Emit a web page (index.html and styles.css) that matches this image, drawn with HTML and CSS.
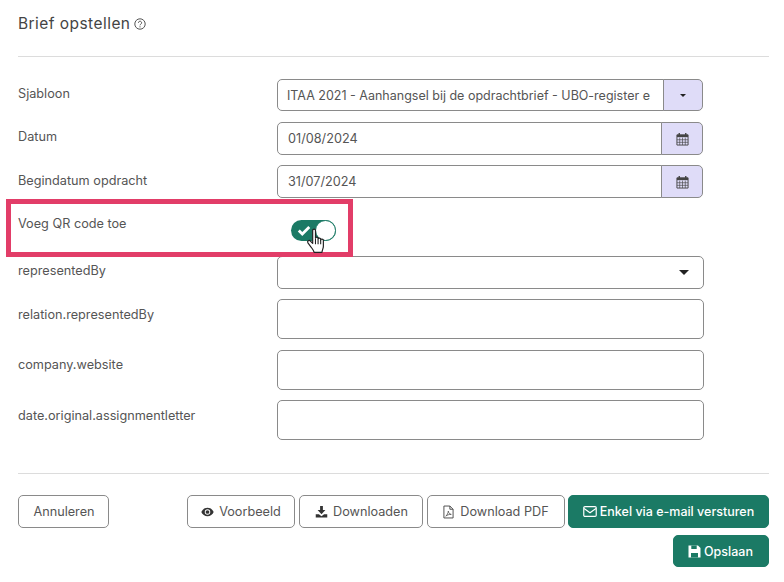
FILE: index.html
```html
<!DOCTYPE html>
<html lang="nl">
<head>
<meta charset="utf-8">
<title>Brief opstellen</title>
<link rel="stylesheet" href="styles.css">
</head>
<body>
<div class="page">
  <header class="head">
    <h1 class="title">Brief opstellen</h1>
    <svg class="help" viewBox="0 0 12 12" width="12" height="12"><circle cx="6" cy="6" r="5.2" fill="none" stroke="#555" stroke-width="1"/><path d="M4.4 4.8a1.6 1.6 0 1 1 2.5 1.3c-.6.4-.9.6-.9 1.2" fill="none" stroke="#555" stroke-width="1"/><circle cx="6" cy="8.8" r=".65" fill="#555"/></svg>
  </header>
  <form class="form">
    <div class="row r-sjabloon">
      <label class="label">Sjabloon</label>
      <div class="group h32">
        <div class="field grow select-text">ITAA 2021 - Aanhangsel bij de opdrachtbrief - UBO-register e</div>
        <div class="addon addon-caret"><span class="caret small"></span></div>
      </div>
    </div>
    <div class="row r-date">
      <label class="label">Datum</label>
      <div class="group h33">
        <div class="field grow">01/08/2024</div>
        <div class="addon">
          <svg class="cal" viewBox="0 0 14 15" width="13" height="14"><path d="M1 3h12v11H1z" fill="none" stroke="#444" stroke-width="1"/><path d="M1 3h12v2.500H1z" fill="#444"/><path d="M3.500 1v3M10.500 1v3" stroke="#444" stroke-width="1.500"/><path d="M1 8.300h12M1 11.100h12M4 6v8M7 6v8M10 6v8" stroke="#444" stroke-width=".7"/></svg>
        </div>
      </div>
    </div>
    <div class="row r-date2">
      <label class="label">Begindatum opdracht</label>
      <div class="group h33">
        <div class="field grow">31/07/2024</div>
        <div class="addon">
          <svg class="cal" viewBox="0 0 14 15" width="13" height="14"><path d="M1 3h12v11H1z" fill="none" stroke="#444" stroke-width="1"/><path d="M1 3h12v2.500H1z" fill="#444"/><path d="M3.500 1v3M10.500 1v3" stroke="#444" stroke-width="1.500"/><path d="M1 8.300h12M1 11.100h12M4 6v8M7 6v8M10 6v8" stroke="#444" stroke-width=".7"/></svg>
        </div>
      </div>
    </div>
    <div class="row r-toggle">
      <label class="label">Voeg QR code toe</label>
      <div class="toggle">
        <svg class="check" viewBox="0 0 14 11" width="14" height="11"><path d="M1.800 5.500l3.500 3.500 7-7" fill="none" stroke="#fff" stroke-width="2.800"/></svg>
        <span class="knob"></span>
      </div>
      <svg class="hand" viewBox="0 0 20 25" width="20" height="25"><path d="M6 2.200c0-1.500 2.600-1.500 2.600 0v7.300c0-1.300 2.400-1.300 2.400 0v.8c0-1.300 2.400-1.300 2.400 0v.9c0-1.300 2.500-1.300 2.500.2v5.500c0 2-1 3-1.300 5.600H7.400c-.5-2-1.800-3.300-3.600-5.800L1.600 13.800c-1-1.600 1-3 2.300-1.700L6 14.300z" fill="#fff" stroke="#222" stroke-width="1.100" stroke-linejoin="round"/><path d="M8.600 10v5M11 10.500v4.500M13.400 11.200v3.800" stroke="#222" stroke-width="1"/></svg>
    </div>
    <div class="row r-rep">
      <label class="label">representedBy</label>
      <div class="group h33">
        <div class="field grow single"><span class="caret"></span></div>
      </div>
    </div>
    <div class="row r-rel">
      <label class="label">relation.representedBy</label>
      <div class="field box"></div>
    </div>
    <div class="row r-web">
      <label class="label">company.website</label>
      <div class="field box"></div>
    </div>
    <div class="row r-orig">
      <label class="label">date.original.assignmentletter</label>
      <div class="field box"></div>
    </div>
  </form>
  <footer class="foot">
    <button class="btn cancel" type="button">Annuleren</button>
    <div class="actions">
      <button class="btn w-prev" type="button">
        <svg viewBox="0 0 16 12" width="13" height="10"><path d="M8 .8C4.500.8 1.700 3 .4 6c1.300 3 4.100 5.200 7.600 5.200S14.300 9 15.600 6C14.300 3 11.500.8 8 .8z" fill="#333"/><circle cx="8" cy="6" r="3.400" fill="#fff"/><circle cx="8" cy="6" r="2.300" fill="#333"/></svg>
        Voorbeeld</button>
      <button class="btn w-down" type="button">
        <svg viewBox="0 0 14 14" width="13" height="13"><path d="M5.500 1h3v4.500h2.700L7 10 2.800 5.500h2.700z" fill="#333"/><path d="M.8 10h3.400L7 12l2.800-2h3.400v3.500H.8z" fill="#333"/></svg>
        Downloaden</button>
      <button class="btn w-pdf" type="button">
        <svg viewBox="0 0 12 15" width="11" height="14"><path d="M1 1h6.500L11 4.500V14H1z" fill="none" stroke="#444" stroke-width="1"/><path d="M7.500 1v3.500H11" fill="none" stroke="#444" stroke-width="1"/><path d="M3 12c1.500-1 2.500-3 2.800-5.500.2 2 1.500 3.300 3.200 3.600-2-.1-4.500.6-6 1.900z" fill="none" stroke="#444" stroke-width=".8"/></svg>
        Download PDF</button>
      <button class="btn primary w-mail" type="button">
        <svg viewBox="0 0 15 12" width="14" height="11"><rect x=".7" y=".7" width="13.600" height="10.600" rx="1.300" fill="none" stroke="#fff" stroke-width="1.300"/><path d="M1 2.800l6.500 4.500L14 2.800" fill="none" stroke="#fff" stroke-width="1.300"/></svg>
        Enkel via e-mail versturen</button>
      <button class="btn primary w-save" type="button">
        <svg viewBox="0 0 13 13" width="13" height="13"><path d="M.5 .5h9.500l2.500 2.500v9.500H.5z" fill="#fff"/><path d="M3.300 .5h5.400v3.500H3.300z" fill="#1b7a65"/><path d="M3 8h7v4.500H3z" fill="#1b7a65"/></svg>
        Opslaan</button>
    </div>
  </footer>
</div>
<div class="highlight"></div>
</body>
</html>
```

FILE: styles.css
```css
* { box-sizing: border-box; }
html, body { margin: 0; padding: 0; background: #fff; }
body {
  width: 784px;
  height: 582px;
  overflow: hidden;
  position: relative;
  font-family: Inter, "Liberation Sans", sans-serif;
  font-size: 12.700px;
  color: #555;
}
.page { padding: 0 15px 0 18px; }
.head {
  display: flex;
  align-items: center;
  gap: 4px;
  height: 57px;
  padding-bottom: 9px;
  border-bottom: 1px solid #dcdcdc;
}
.title {
  margin: 0;
  font-size: 15.500px;
  font-weight: 400;
  letter-spacing: .45px;
  color: #444;
}
.help { margin-top: 1px; }
.form { padding-top: 22px; }
.row {
  display: grid;
  grid-template-columns: 259px 426px;
  position: relative;
}
.label { padding-top: 7px; line-height: 15px; color: #555; }
.r-sjabloon { height: 43px; }
.r-date { height: 43px; }
.r-date2 { height: 43px; }
.r-toggle { height: 48px; }
.r-rep { height: 43px; }
.r-rel { height: 51px; }
.r-web { height: 50px; }
.r-orig { height: 74px; border-bottom: 1px solid #dcdcdc; }
.r-rep .label { padding-top: 7px; }
.r-rel .label { padding-top: 8px; }
.r-web .label { padding-top: 7px; }
.r-orig .label { padding-top: 8px; }
.r-date .label { padding-top: 7px; }
.r-date2 .label { padding-top: 8px; }
.r-toggle .label { padding-top: 8px; }
.group { display: flex; }
.r-rep .group { width: 427px; }
.h32 { height: 32px; }
.h33 { height: 33px; }
.field {
  display: flex;
  align-items: center;
  padding: 0 10px;
  border: 1px solid #8a8a8a;
  background: #fff;
  color: #555;
  font-size: inherit;
  white-space: nowrap;
  overflow: hidden;
}
.select-text { font-size: 12.500px; padding-left: 9px; }
.grow { flex: 1; border-radius: 5px 0 0 5px; min-width: 0; }
.single { border-radius: 5px; justify-content: flex-end; }
.box { height: 40px; width: 427px; border-radius: 5px; }
.addon {
  width: 42px;
  display: flex;
  align-items: center;
  justify-content: center;
  background: #dfdcf8;
  border: 1px solid #8a8a8a;
  margin-left: -1px;
  border-radius: 0 5px 5px 0;
}
.addon-caret { width: 40px; }
.caret {
  width: 0;
  height: 0;
  border-left: 5px solid transparent;
  border-right: 5px solid transparent;
  border-top: 5px solid #222;
  margin-right: 4px;
}
.caret.small {
  border-left-width: 3px;
  border-right-width: 3px;
  border-top-width: 3px;
  margin-right: 0;
}
.toggle {
  position: absolute;
  left: 273px;
  top: 12px;
  width: 45px;
  height: 21px;
  border-radius: 11px;
  background: #1b7a65;
}
.check { position: absolute; left: 6px; top: 5px; }
.knob {
  position: absolute;
  right: 0;
  top: 0;
  width: 21px;
  height: 21px;
  border-radius: 50%;
  background: #fff;
  border: 1.500px solid #1b7a65;
}
.hand { position: absolute; left: 289px; top: 21px; z-index: 2; transform: scale(1.08); }
.foot {
  display: flex;
  justify-content: space-between;
  align-items: flex-start;
  padding-top: 21px;
}
.actions {
  display: flex;
  flex-wrap: wrap;
  justify-content: flex-end;
  gap: 7px 4px;
  width: 582px;
}
.btn {
  display: inline-flex;
  align-items: center;
  justify-content: center;
  gap: 5px;
  height: 33px;
  padding: 0;
  font-family: inherit;
  font-size: inherit;
  color: #555;
  background: #fff;
  border: 1px solid #8a8a8a;
  border-radius: 5px;
}
.cancel { width: 91px; padding-left: 1px; }
.w-prev { width: 108px; }
.w-down { width: 124px; padding-left: 1px; }
.w-pdf { width: 138px; margin-right: -1px; gap: 6px; }
.primary {
  background: #1b7a65;
  border-color: #1b7a65;
  color: #fff;
  font-weight: 500;
  font-size: 12.500px;
  gap: 3px;
}
.w-mail { width: 201px; }
.w-save { width: 96px; height: 32px; padding-right: 1px; }
.highlight {
  position: absolute;
  left: 6px;
  top: 199px;
  width: 347px;
  height: 58px;
  border: 5px solid #e23d68;
  pointer-events: none;
}
```
